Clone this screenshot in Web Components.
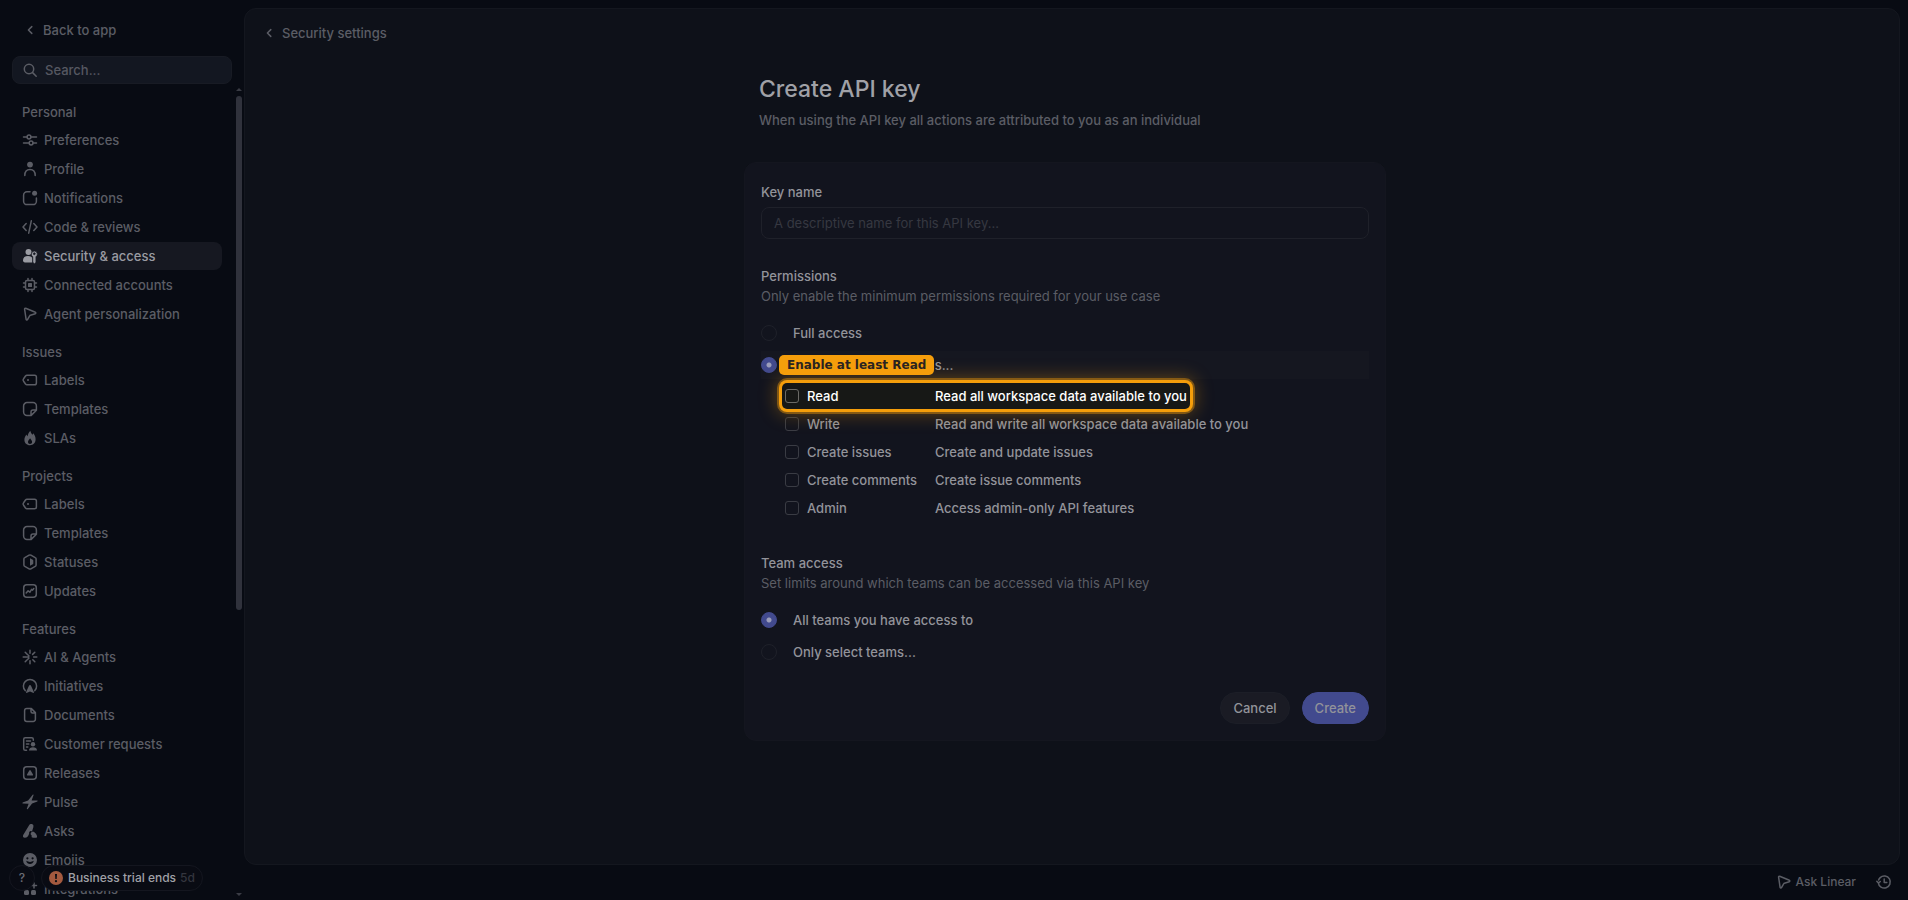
<!DOCTYPE html>
<html lang="en">
<head>
<meta charset="utf-8">
<title>Create API key</title>
<style>
  html, body { margin: 0; height: 100%; background: #080b13; }
  body {
    font: 500 13px/20px Inter, "Liberation Sans", sans-serif;
    color: #5b5d65;
    overflow: hidden;
    --bg: #080b13;
    --panel: #0e1119;
    --card: #12141e;
    --line: #1f212a;
    --text: #92939a;
    --accent: #424a8e;
    --mark: #f59e0b;
  }
</style>
</head>
<body>
<app-shell>
  <settings-nav slot="nav">
    <nav-group heading="Personal">
      <nav-item icon="sliders">Preferences</nav-item>
      <nav-item icon="profile">Profile</nav-item>
      <nav-item icon="bell">Notifications</nav-item>
      <nav-item icon="code">Code &amp; reviews</nav-item>
      <nav-item icon="security" active>Security &amp; access</nav-item>
      <nav-item icon="chip">Connected accounts</nav-item>
      <nav-item icon="pointer">Agent personalization</nav-item>
    </nav-group>
    <nav-group heading="Issues">
      <nav-item icon="label">Labels</nav-item>
      <nav-item icon="template">Templates</nav-item>
      <nav-item icon="flame">SLAs</nav-item>
    </nav-group>
    <nav-group heading="Projects">
      <nav-item icon="label">Labels</nav-item>
      <nav-item icon="template">Templates</nav-item>
      <nav-item icon="status">Statuses</nav-item>
      <nav-item icon="updates">Updates</nav-item>
    </nav-group>
    <nav-group heading="Features">
      <nav-item icon="spark">AI &amp; Agents</nav-item>
      <nav-item icon="initiative">Initiatives</nav-item>
      <nav-item icon="document">Documents</nav-item>
      <nav-item icon="customer">Customer requests</nav-item>
      <nav-item icon="release">Releases</nav-item>
      <nav-item icon="pulse">Pulse</nav-item>
      <nav-item icon="asks">Asks</nav-item>
      <nav-item icon="emoji">Emojis</nav-item>
      <nav-item icon="integrations">Integrations</nav-item>
    </nav-group>
  </settings-nav>
  <api-key-page slot="main"></api-key-page>
  <trial-status slot="status" days="5d">Business trial ends</trial-status>
  <ask-bar slot="footer"></ask-bar>
</app-shell>

<script>
const ICONS = {
  back: '<path class="s" d="M9.8 4.6 6.4 8l3.4 3.4"/>',
  search: '<circle class="s" cx="7" cy="7" r="4.7"/><path class="s" d="m10.6 10.6 3.6 3.6"/>',
  sliders: '<path class="s" d="M1.5 5h3.2M9.2 5h5.3M1.5 11h5.3M11.3 11h3.2"/><circle class="s" cx="7" cy="5" r="1.9"/><circle class="s" cx="9.1" cy="11" r="1.9"/>',
  profile: '<circle cx="8" cy="3.6" r="2.9"/><path class="s" d="M2.8 14.5c0-3.8 1.9-6 5.2-6s5.2 2.2 5.2 6"/>',
  bell: '<path class="s" d="M8 1.8H5A3.4 3.4 0 0 0 1.6 5.2v6A3.4 3.4 0 0 0 5 14.6h6a3.4 3.4 0 0 0 3.4-3.4V8"/><circle cx="12.6" cy="3.3" r="2.5"/>',
  code: '<path class="s" d="M4.2 4.5 1 8l3.2 3.5M11.8 4.5 15 8l-3.2 3.5M9.300 1.800 6.700 14.200"/>',
  security: '<circle cx="6.500" cy="4" r="3"/><path d="M1 12.300C1 9.500 3 8 6 8c1.300 0 2.300.3 3.200.8l1 1v4.700H3c-1.300 0-2-.9-2-2.200Z"/><path fill-rule="evenodd" stroke="#161821" stroke-width=".6" d="M12.300 3.100a3.100 3.100 0 0 1 1.600 5.700v5.400l-1.500 1.500-1.600-1.500V8.800a3.100 3.100 0 0 1 1.500-5.700Zm0 1.600a1 1 0 1 0 0 2 1 1 0 0 0 0-2Z"/>',
  chip: '<rect class="s" x="3.500" y="3.500" width="9" height="9" rx="1.500"/><rect x="6" y="6" width="4" height="4" rx=".6"/><path class="s" d="M6 3.500V1.500M10 3.500V1.500M6 14.500v-2M10 14.500v-2M1.500 6h2M1.500 10h2M12.500 6h2M12.500 10h2"/>',
  pointer: '<path class="s" d="m2.600 3.200 1.500 10.100c.1.700 1 .9 1.400.3l2.300-3.900c.1-.2.300-.4.600-.5l4.900-1.500c.7-.2.700-1.100.1-1.400L3.700 2.300c-.6-.3-1.200.2-1.100.9Z"/>',
  label: '<path class="s" d="M5 3.300h7.600c1 0 1.800.8 1.800 1.800v5.800c0 1-.8 1.800-1.800 1.800H5c-.6 0-1.100-.2-1.500-.7L1.600 9.300a2 2 0 0 1 0-2.600L3.500 4c.4-.5.900-.7 1.500-.7Z"/><circle cx="6" cy="8" r="1"/>',
  template: '<path class="s" d="M5 1.600h6A3.400 3.400 0 0 1 14.400 5v4.200L9.200 14.400H5A3.400 3.400 0 0 1 1.600 11V5A3.400 3.400 0 0 1 5 1.600ZM9 14.200V11a2 2 0 0 1 2-2h3.200"/>',
  flame: '<path fill-rule="evenodd" d="M8.300.8c.4 2 1.300 2.900 2.200 3.900.4-.3.600-.8.700-1.400 1.500 1.700 2.400 3.800 2.400 6 0 3.500-2.300 5.900-5.600 5.900s-5.600-2.300-5.600-5.500c0-2 .9-3.700 2-5.200.3.800.6 1.300 1.100 1.700C6 4.200 6.800 2.300 8.300.8Zm-.2 7.400c-.8 1.600-2.100 2.100-2.100 3.700 0 1.200.8 2 2 2s2.100-.8 2.100-2c0-1.600-1.300-2.100-2-3.700Z"/>',
  status: '<path class="s" d="M7.100 1.200a1.800 1.800 0 0 1 1.800 0l4.300 2.400c.6.300.9.900.9 1.500v5.800c0 .6-.3 1.200-.9 1.500l-4.300 2.400a1.800 1.800 0 0 1-1.800 0l-4.300-2.400c-.6-.3-.9-.9-.9-1.500V5.100c0-.6.300-1.200.9-1.500Z"/><path d="M8 4.200 10.800 5.800c.3.200.5.500.5.900v2.600c0 .4-.2.700-.5.900L8 11.800Z"/>',
  updates: '<rect class="s" x="1.700" y="1.700" width="12.600" height="12.600" rx="3"/><path class="s" d="m4.200 10 1.900-2.200 1.800 1.400 1.700-2.900 1 .8 1.200-1.600"/>',
  spark: '<path class="s" d="M8 1.200v3M8 11.800v3M1.200 8h3M11.600 8h3.200M3.200 3.200l2 2M10.800 10.800l2 2M12.800 3.200l-2.200 2.200M5.200 10.800l-2 2M5 8h1.500M5.800 5.800 7 7M5.800 10.200 7 9"/>',
  initiative: '<path class="s" d="M3.200 12.600a6.600 6.600 0 1 1 9.600 0"/><path d="M8 7c.4 0 .7.200.9.600l3 6.300c.3.600-.4 1.200-1 .9L8 13.400l-2.900 1.400c-.6.300-1.300-.3-1-.9l3-6.300c.2-.4.500-.6.900-.6Z"/>',
  document: '<path class="s" d="M4.800 1.600h4.600l4 4v6.600a2.200 2.200 0 0 1-2.200 2.200H4.800a2.200 2.200 0 0 1-2.200-2.200V3.800c0-1.200 1-2.200 2.200-2.200ZM9 1.800V4.500c0 .8.700 1.500 1.500 1.500h2.700"/>',
  customer: '<path class="s" d="M4.500 14.300H3.300c-.9 0-1.600-.7-1.600-1.600V3.300c0-.9.700-1.600 1.600-1.600h6.400c.9 0 1.600.7 1.600 1.600v1M4.500 5h4M4.500 8h2.300M4.500 11h1.300"/><circle cx="11" cy="8.200" r="2.200"/><path d="M7 14.500c0-2 1.600-3.200 4-3.200s4 1.200 4 3.200Z"/>',
  release: '<rect class="s" x="1.700" y="1.700" width="12.600" height="12.600" rx="3"/><path d="M7.300 5.400a.8.800 0 0 1 1.400 0l2.300 4.100c.3.500-.1 1.100-.7 1.100H5.700c-.6 0-1-.6-.7-1.100Z"/>',
  pulse: '<path d="M11.700.8 9.600 6.500l6 .1-.2.900-5.300 2.100-4.500 5.700-.9-.4L6.600 9.700.5 9.400l.1-.9 5.500-1.900L10.900.5Z"/>',
  asks: '<path d="M7.100 2.300a2.300 2.300 0 0 1 4.300 1.600L10 8.600C8.600 7.300 6.800 8.600 7.200 10.200c-.5 2.600-2 4.600-4.400 4.600C1.200 14.800.5 13.300 1.200 12Z"/><path d="M11 8.500c1.800.8 4 3 4.100 5 0 .8-.5 1.300-1.300 1.300h-3c-.8 0-1.200-.4-1.200-1.200v-1.400c-2-.8-.4-3.600 1.400-3.700Z"/>',
  emoji: '<path fill-rule="evenodd" d="M8 1a7 7 0 1 1 0 14A7 7 0 0 1 8 1ZM5.400 5.200a1.100 1.100 0 1 0 0 2.200 1.100 1.100 0 0 0 0-2.200Zm5.200 0a1.100 1.100 0 1 0 0 2.200 1.100 1.100 0 0 0 0-2.200ZM4.200 8.800c.5 2.100 2 3.300 3.800 3.300s3.300-1.200 3.800-3.300c-1.200.8-2.500 1.100-3.800 1.100s-2.600-.3-3.800-1.100Z"/>',
  integrations: '<rect x="2" y="2" width="5" height="5" rx="1.500"/><rect x="2" y="9" width="5" height="5" rx="1.500"/><rect x="9" y="9" width="5" height="5" rx="1.500"/><path class="s" d="M12 2v5M9.500 4.500h5"/>',
  alert: '<circle cx="8" cy="8" r="7" fill="#a45a3f"/><path d="M7 4h2l-.3 5H7.300Z" fill="#0b0d14"/><circle cx="8" cy="11.200" r="1.100" fill="#0b0d14"/>',
  history: '<path class="s" d="M2.300 8.600A6 6 0 1 0 4.200 3.600 6 6 0 0 0 2.600 6M.8 7.200l1.600 1.900 1.900-1.600M8.200 5v3.400h2.600"/>'
};

class UiIcon extends HTMLElement {
  connectedCallback() {
    this.attachShadow({ mode: 'open' });
    this.shadowRoot.innerHTML = `
      <style>
        :host { display: block; flex: none; width: 16px; height: 16px; }
        svg { display: block; width: 100%; height: 100%; fill: currentColor; overflow: visible; }
        .s { fill: none; stroke: currentColor; stroke-width: 1.5; stroke-linecap: round; stroke-linejoin: round; }
      </style>
      <svg viewBox="0 0 16 16" aria-hidden="true">${ICONS[this.getAttribute('name')] || ''}</svg>
    `;
  }
}
customElements.define('ui-icon', UiIcon);

class AppShell extends HTMLElement {
  constructor() {
    super();
    this.attachShadow({ mode: 'open' });
    this.shadowRoot.innerHTML = `
      <style>
        :host {
          position: relative;
          display: grid;
          grid-template-columns: 244px minmax(0, 1fr);
          height: 100vh;
        }
        .column {
          display: flex;
          flex-direction: column;
          min-height: 0;
          padding: 8px 8px 0 0;
        }
        main {
          flex: 1;
          min-height: 0;
          overflow: hidden;
          box-sizing: border-box;
          border: 1px solid #14171f;
          border-radius: 12px;
          background: var(--panel);
        }
        .status { position: absolute; left: 9px; bottom: 9px; }
      </style>
      <slot name="nav"></slot>
      <div class="column">
        <main><slot name="main"></slot></main>
        <slot name="footer"></slot>
      </div>
      <div class="status"><slot name="status"></slot></div>
    `;
  }
}
customElements.define('app-shell', AppShell);

class SettingsNav extends HTMLElement {
  constructor() {
    super();
    this.attachShadow({ mode: 'open' });
    this.shadowRoot.innerHTML = `
      <style>
        :host { display: flex; flex-direction: column; min-height: 0; height: 100vh; }
        .back {
          display: flex;
          align-items: center;
          gap: 5px;
          padding: 20px 22px 16px;
          color: inherit;
          text-decoration: none;
        }
        .search {
          display: flex;
          align-items: center;
          gap: 7px;
          box-sizing: border-box;
          height: 28px;
          margin: 0 12px;
          padding: 0 9px;
          border: 1px solid #181b24;
          border-radius: 8px;
          background: #131721;
        }
        input {
          flex: 1;
          min-width: 0;
          padding: 0;
          border: 0;
          outline: 0;
          background: none;
          color: inherit;
          font: inherit;
        }
        input::placeholder { color: #565861; opacity: 1; }
        .scroll { display: flex; flex: 1; min-height: 0; }
        nav {
          display: flex;
          flex: 1;
          flex-direction: column;
          gap: 12px;
          min-width: 0;
          padding: 16px 14px 0 12px;
          overflow: hidden;
        }
        .bar {
          display: flex;
          flex-direction: column;
          align-items: center;
          width: 6px;
          padding: 4px 2px 4px 0;
        }
        .arrow { border: 3px solid transparent; }
        .up { border-top: 0; border-bottom-color: #3a3c45; }
        .down { border-bottom: 0; border-top-color: #3a3c45; }
        .track { flex: 1; width: 6px; margin: 5px 0 6px; }
        .thumb { height: 65%; border-radius: 3px; background: #30323c; }
      </style>
      <a class="back" href="#"><ui-icon name="back"></ui-icon>Back to app</a>
      <label class="search"><ui-icon name="search"></ui-icon><input type="search" placeholder="Search..." aria-label="Search"></label>
      <div class="scroll">
        <nav><slot></slot></nav>
        <div class="bar" aria-hidden="true">
          <div class="arrow up"></div>
          <div class="track"><div class="thumb"></div></div>
          <div class="arrow down"></div>
        </div>
      </div>
    `;
  }
}
customElements.define('settings-nav', SettingsNav);

class NavGroup extends HTMLElement {
  connectedCallback() {
    this.attachShadow({ mode: 'open' });
    this.shadowRoot.innerHTML = `
      <style>
        :host { display: block; flex: none; }
        h2 { margin: 0 0 2px; padding-left: 10px; font: inherit; line-height: 24px; }
        .items { display: flex; flex-direction: column; gap: 1px; }
      </style>
      <h2>${this.getAttribute('heading')}</h2>
      <div class="items"><slot></slot></div>
    `;
  }
}
customElements.define('nav-group', NavGroup);

class NavItem extends HTMLElement {
  connectedCallback() {
    this.attachShadow({ mode: 'open' });
    this.shadowRoot.innerHTML = `
      <style>
        :host { display: block; }
        a {
          display: flex;
          align-items: center;
          gap: 6px;
          height: 28px;
          padding: 0 10px;
          border-radius: 8px;
          color: inherit;
          text-decoration: none;
        }
        :host([active]) a { background: #161821; color: #9a9ba2; }
      </style>
      <a href="#"><ui-icon name="${this.getAttribute('icon')}"></ui-icon><span><slot></slot></span></a>
    `;
  }
}
customElements.define('nav-item', NavItem);

class TrialStatus extends HTMLElement {
  connectedCallback() {
    this.attachShadow({ mode: 'open' });
    this.shadowRoot.innerHTML = `
      <style>
        :host { display: flex; gap: 6px; }
        button {
          display: flex;
          align-items: center;
          justify-content: center;
          box-sizing: border-box;
          height: 26px;
          border: 1px solid #14161f;
          border-radius: 13px;
          background: #090b13;
          color: #a0a1a7;
          font: inherit;
          font-size: 12px;
        }
        .help { width: 26px; padding: 0; color: #6b6d75; }
        .trial { gap: 4px; padding: 0 7px 0 6px; }
        .days { color: #33353e; }
      </style>
      <button class="help" aria-label="Help">?</button>
      <button class="trial"><ui-icon name="alert"></ui-icon><span><slot></slot></span><span class="days">${this.getAttribute('days')}</span></button>
    `;
  }
}
customElements.define('trial-status', TrialStatus);

class AskBar extends HTMLElement {
  constructor() {
    super();
    this.attachShadow({ mode: 'open' });
    this.shadowRoot.innerHTML = `
      <style>
        :host {
          display: flex;
          justify-content: flex-end;
          align-items: center;
          gap: 20px;
          box-sizing: border-box;
          height: 35px;
          padding: 0 8px 1px 0;
        }
        button {
          display: flex;
          align-items: center;
          gap: 4px;
          padding: 0;
          border: 0;
          background: none;
          color: inherit;
          font: inherit;
          font-size: 12px;
        }
      </style>
      <button><ui-icon name="pointer"></ui-icon>Ask Linear</button>
      <button aria-label="History"><ui-icon name="history"></ui-icon></button>
    `;
  }
}
customElements.define('ask-bar', AskBar);

class RadioRow extends HTMLElement {
  connectedCallback() {
    const checked = this.hasAttribute('checked') ? 'checked' : '';
    this.attachShadow({ mode: 'open' });
    this.shadowRoot.innerHTML = `
      <style>
        :host { display: block; position: relative; }
        label {
          display: flex;
          align-items: center;
          gap: 16px;
          height: 28px;
          color: var(--text);
          font-weight: 450;
        }
        :host([lit]) label { background: #151720; }
        input {
          appearance: none;
          box-sizing: border-box;
          width: 16px;
          height: 16px;
          margin: 0;
          border: 1px solid var(--line);
          border-radius: 50%;
        }
        input:checked {
          border-color: var(--accent);
          background: radial-gradient(circle, #9c9ebb 2px, var(--accent) 3px);
        }
      </style>
      <label><input type="radio" ${checked}><span><slot></slot></span></label>
      <slot name="callout"></slot>
    `;
  }
}
customElements.define('radio-row', RadioRow);

class CalloutTag extends HTMLElement {
  constructor() {
    super();
    this.attachShadow({ mode: 'open' });
    this.shadowRoot.innerHTML = `
      <style>
        :host {
          position: absolute;
          left: 18px;
          top: 4px;
          z-index: 2;
          padding: 0 8px;
          border-radius: 5px;
          background: var(--mark);
          color: #2a2320;
          font: bold 12px/20px "DejaVu Sans", sans-serif;
          white-space: nowrap;
        }
      </style>
      <slot></slot>
    `;
  }
}
customElements.define('callout-tag', CalloutTag);

class PermissionRow extends HTMLElement {
  connectedCallback() {
    this.attachShadow({ mode: 'open' });
    this.shadowRoot.innerHTML = `
      <style>
        :host { display: block; position: relative; color: var(--text); font-weight: 450; }
        label {
          display: grid;
          grid-template-columns: 14px 120px auto;
          align-items: center;
          column-gap: 8px;
          width: max-content;
          height: 26px;
          padding: 0 3px;
        }
        input {
          appearance: none;
          box-sizing: border-box;
          width: 14px;
          height: 14px;
          margin: 0;
          border: 1px solid #3a3c44;
          border-radius: 3px;
        }
        :host([marked]) { z-index: 1; color: #fff; }
        :host([marked]) label {
          border-radius: 5px;
          background: #171816;
          box-shadow: 0 0 0 3px var(--mark), 0 0 0 5px #f59e0b66, 0 0 18px 5px #f59e0b59;
        }
        :host([marked]) input { border-color: #6b6a66; }
      </style>
      <label><input type="checkbox"><span>${this.getAttribute('name')}</span><span><slot></slot></span></label>
    `;
  }
}
customElements.define('permission-row', PermissionRow);

class FormSection extends HTMLElement {
  connectedCallback() {
    this.attachShadow({ mode: 'open' });
    this.shadowRoot.innerHTML = `
      <style>
        :host { display: block; }
        h2 { margin: 0; color: var(--text); font: inherit; }
        p { margin: 0 0 13px; font-weight: 400; }
        .rows { display: flex; flex-direction: column; gap: 4px; }
      </style>
      <h2>${this.getAttribute('heading')}</h2>
      <p>${this.getAttribute('hint')}</p>
      <div class="rows"><slot></slot></div>
    `;
  }
}
customElements.define('form-section', FormSection);

class ApiKeyPage extends HTMLElement {
  constructor() {
    super();
    this.attachShadow({ mode: 'open' });
    this.shadowRoot.innerHTML = `
      <style>
        :host { display: block; padding: 14px 14px 0 0; }
        .crumb {
          display: flex;
          align-items: center;
          gap: 5px;
          width: max-content;
          padding-left: 16px;
          color: inherit;
          text-decoration: none;
        }
        .content { max-width: 642px; margin: 0 auto; }
        header { padding: 30px 15px 32px; }
        h1 { margin: 0 0 5px; color: #a0a1a7; font: 500 23px/32px Inter, sans-serif; }
        header p { margin: 0; font-weight: 450; }
        form {
          box-sizing: border-box;
          padding: 19px 16px 16px;
          border: 1px solid #14161f;
          border-radius: 12px;
          background: var(--card);
        }
        .name { display: block; margin-bottom: 27px; color: var(--text); }
        .name input {
          display: block;
          box-sizing: border-box;
          width: 100%;
          height: 32px;
          margin-top: 5px;
          padding: 0 12px;
          border: 1px solid var(--line);
          border-radius: 8px;
          outline: 0;
          background: none;
          color: inherit;
          font: inherit;
          font-weight: 400;
        }
        .name input::placeholder { color: #363841; opacity: 1; }
        .scopes { display: grid; gap: 2px; padding: 0 0 32px 21px; }
        .actions { display: flex; justify-content: flex-end; gap: 12px; padding-top: 26px; }
        button {
          height: 32px;
          padding: 0 12px;
          border: 1px solid #1c1e27;
          border-radius: 16px;
          background: #1a1b24;
          color: var(--text);
          font: inherit;
        }
        .primary { border-color: var(--accent); background: var(--accent); }
      </style>
      <a class="crumb" href="#"><ui-icon name="back"></ui-icon>Security settings</a>
      <div class="content">
        <header>
          <h1>Create API key</h1>
          <p>When using the API key all actions are attributed to you as an individual</p>
        </header>
        <form>
          <label class="name">Key name
            <input type="text" placeholder="A descriptive name for this API key...">
          </label>
          <form-section heading="Permissions" hint="Only enable the minimum permissions required for your use case">
            <radio-row>Full access</radio-row>
            <radio-row checked lit>Only select permissions...<callout-tag slot="callout">Enable at least Read</callout-tag></radio-row>
            <div class="scopes">
              <permission-row name="Read" marked>Read all workspace data available to you</permission-row>
              <permission-row name="Write">Read and write all workspace data available to you</permission-row>
              <permission-row name="Create issues">Create and update issues</permission-row>
              <permission-row name="Create comments">Create issue comments</permission-row>
              <permission-row name="Admin">Access admin-only API features</permission-row>
            </div>
          </form-section>
          <form-section heading="Team access" hint="Set limits around which teams can be accessed via this API key">
            <radio-row checked>All teams you have access to</radio-row>
            <radio-row>Only select teams...</radio-row>
          </form-section>
          <div class="actions">
            <button type="button">Cancel</button>
            <button type="button" class="primary">Create</button>
          </div>
        </form>
      </div>
    `;
  }
}
customElements.define('api-key-page', ApiKeyPage);
</script>
</body>
</html>
